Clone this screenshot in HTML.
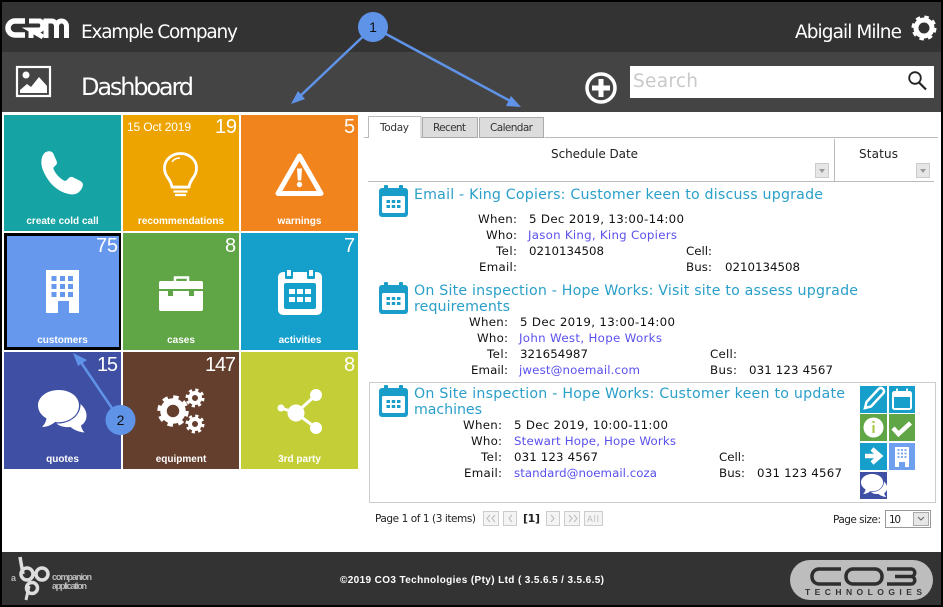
<!DOCTYPE html>
<html><head><meta charset="utf-8"><style>
html,body{margin:0;padding:0;background:#000;width:943px;height:607px;overflow:hidden}
svg{display:block}
text{font-family:"DejaVu Sans","Liberation Sans",sans-serif;white-space:pre}
.h{fill:#fff}
.n{font-family:"Liberation Sans",sans-serif;fill:#fff;font-size:20px}
.l{font-family:"Liberation Sans",sans-serif;fill:#fff;font-size:10px;font-weight:bold;text-anchor:middle}
.t{font-size:14.2px;fill:#2a9fc9}
.c{font-size:11.8px;fill:#111}
.a{font-size:11.8px;fill:#5a50ee}
.p{font-size:10.5px;fill:#222}
.b{fill:#f4f4f4;stroke:#ccc}
.g{font-family:"Liberation Sans",sans-serif;font-size:9px;font-weight:bold;fill:#bbb}
</style></head><body>
<svg width="943" height="607" viewBox="0 0 943 607" xmlns="http://www.w3.org/2000/svg">
<defs>
<g id="cal"><rect x="0" y="3" width="29" height="29" rx="3" fill="#1b9dc9"/><rect x="3" y="11" width="23" height="17" rx="1.5" fill="#fff"/><rect x="5" y="0" width="4" height="7" rx="1" fill="#1b9dc9"/><rect x="20" y="0" width="4" height="7" rx="1" fill="#1b9dc9"/><rect x="7.500" y="15" width="3.500" height="3" fill="#1b9dc9"/><rect x="12.750" y="15" width="3.500" height="3" fill="#1b9dc9"/><rect x="18" y="15" width="3.500" height="3" fill="#1b9dc9"/><rect x="7.500" y="20" width="3.500" height="3" fill="#1b9dc9"/><rect x="12.750" y="20" width="3.500" height="3" fill="#1b9dc9"/><rect x="18" y="20" width="3.500" height="3" fill="#1b9dc9"/></g>
<g id="bub"><path d="M20.500 0C9 0 0 7 0 15.500c0 5.500 3.500 10 8.500 13-.5 3-2 6-4.500 8.500 5 0 9.500-2 13-5 1 .2 2 .2 3.500.2 11.500 0 20.500-7.500 20.500-16.700S32 0 20.500 0z" fill="#fff"/><path d="M42.500 14c.5 10-8 18-20 19.500-1.500 0-3 0-4 0 3.500 3 8.500 4 14 3.500 3 2.500 8 5 14 5.500-2-2-3-4.500-3.500-7 4-2.500 5.500-6 5.500-10 0-4-2-8-6-11.500z" fill="#fff"/></g>
</defs>

<rect x="2" y="2" width="939" height="50" fill="#333"/>
<rect x="2" y="52" width="939" height="60" fill="#444"/>
<rect x="2" y="112" width="939" height="440" fill="#fff"/>
<rect x="2" y="552" width="939" height="53" fill="#333"/>

<!-- CRM logo -->
<g fill="none" stroke="#fff" stroke-width="5.500">
<path d="M25 21H15a6.500 6.500 0 0 0 0 14h10"/>
<path d="M29 21H40a5 5 0 0 1 0 9H31l12 7M31 30v8" stroke-width="5"/>
<path d="M46 38V21h5.500a5 5 0 0 1 5 5v12M56.500 26a5 5 0 0 1 5-5h0a5 5 0 0 1 5 5v12" stroke-width="5"/>
</g>
<text class="h" x="81" y="38" font-size="18.500" textLength="157">Example Company</text>
<text class="h" x="81" y="95" font-size="24" textLength="113">Dashboard</text>
<text class="h" x="795" y="38" font-size="18.500" textLength="107">Abigail Milne</text>

<!-- settings gear -->
<circle cx="924" cy="28" r="8" fill="none" stroke="#fff" stroke-width="5"/>
<circle cx="924" cy="28" r="10.500" fill="none" stroke="#fff" stroke-width="4" stroke-dasharray="4.200 4.050"/>

<!-- picture icon -->
<rect x="17" y="67" width="33" height="29" fill="none" stroke="#fff" stroke-width="2.200"/>
<circle cx="26" cy="75" r="3.500" fill="#fff"/>
<path d="M20 93v-3l7-6 4 3 8-10 8 9v7z" fill="#fff"/>

<!-- add -->
<circle cx="601" cy="88" r="14" fill="none" stroke="#fff" stroke-width="3.500"/>
<path d="M601 79v18M592 88h18" stroke="#fff" stroke-width="5"/>

<!-- search -->
<rect x="630" y="66" width="304" height="32" fill="#fff"/>
<text x="633" y="87" font-size="18.500" fill="#c9c9c9" textLength="65">Search</text>
<circle cx="915" cy="78" r="5.800" fill="none" stroke="#222" stroke-width="1.800"/>
<path d="M919 82.500l7 7" stroke="#222" stroke-width="2.200"/>

<!-- tiles -->
<rect x="4" y="115" width="117" height="116" fill="#15a3a3"/>
<rect x="123" y="115" width="116" height="116" fill="#eea400"/>
<rect x="241" y="115" width="117" height="116" fill="#f2841d"/>
<rect x="4" y="233" width="117" height="117" fill="#000"/>
<rect x="7" y="236" width="112" height="111" fill="#6699ee"/>
<rect x="123" y="233" width="116" height="117" fill="#60a646"/>
<rect x="241" y="233" width="117" height="117" fill="#14a0cb"/>
<rect x="4" y="352" width="117" height="117" fill="#3f4fa3"/>
<rect x="123" y="352" width="116" height="117" fill="#653f2e"/>
<rect x="241" y="352" width="117" height="117" fill="#c4cf38"/>

<text class="n" x="215" y="133" textLength="22">19</text>
<text class="n" x="344" y="133" font-size="20">5</text>
<text x="127" y="131" font-size="12" fill="#fff" textLength="64" style="font-family:'Liberation Sans',sans-serif">15 Oct 2019</text>
<text class="n" x="96" y="252" textLength="22">75</text>
<text class="n" x="225" y="252">8</text>
<text class="n" x="344" y="252">7</text>
<text class="n" x="97" y="371" textLength="21">15</text>
<text class="n" x="205" y="371" textLength="31">147</text>
<text class="n" x="344" y="371">8</text>

<text class="l" x="62.500" y="224">create cold call</text>
<text class="l" x="181" y="224">recommendations</text>
<text class="l" x="299.500" y="224">warnings</text>
<text class="l" x="62.500" y="343">customers</text>
<text class="l" x="181" y="343">cases</text>
<text class="l" x="300" y="343">activities</text>
<text class="l" x="62.500" y="462">quotes</text>
<text class="l" x="181" y="462">equipment</text>
<text class="l" x="299.500" y="462">3rd party</text>

<!-- phone -->
<path transform="translate(41 151) scale(1.050) translate(-37 -151)" d="M42 152c3-1.500 6-.5 7 2l3 7c.7 2-.5 3.500-2.500 5-1 1-.7 2 0 3.500 2 4 5 7 9 9.500 1.500.8 2.500.5 3.500-.7 1.500-2 3-3 5-2.500l7 3.500c2.500 1.200 3.500 3 2.500 6-1.500 4-5 7-9 7-9 0-18-6-23-13-5-7-8-14-7-20 .5-3.500 2-6 4-7.300z" fill="#fff"/>
<!-- bulb -->
<path d="M172 187c-.5-4-2.500-7-5-10.500-2-3-2.500-6-2.500-8.500 0-8 7-14.500 16-14.500s16 6.500 16 14.500c0 2.500-.5 5.500-2.500 8.500-2.500 3.500-4.500 6.500-5 10.500z" fill="none" stroke="#fff" stroke-width="2.800"/>
<path d="M172 162c1.500-2.500 4.500-4 8-4" fill="none" stroke="#fff" stroke-width="1.500"/>
<path d="M172.500 187.500h16M173.500 191.500h14M175 195h11" stroke="#fff" stroke-width="2.200"/>
<!-- warning -->
<path d="M299.500 156L278 193.500h43z" fill="none" stroke="#fff" stroke-width="5" stroke-linejoin="round"/>
<path d="M297 168.500h5l-.8 12h-3.400z" fill="#fff"/><circle cx="299.500" cy="184.500" r="2.700" fill="#fff"/>

<!-- building -->
<path d="M46 270h33v43H69v-12H58v12H46z" fill="#fff"/>
<g fill="#6699ee"><rect x="51.500" y="276" width="5" height="5"/><rect x="60" y="276" width="5" height="5"/><rect x="68" y="276" width="5" height="5"/><rect x="51.500" y="284" width="5" height="5"/><rect x="60" y="284" width="5" height="5"/><rect x="68" y="284" width="5" height="5"/><rect x="51.500" y="292" width="5" height="5"/><rect x="60" y="292" width="5" height="5"/><rect x="68" y="292" width="5" height="5"/></g>
<!-- briefcase -->
<path d="M175 282v-4.500h13v4.500" fill="none" stroke="#fff" stroke-width="2.500"/>
<rect x="159" y="281" width="44" height="30" rx="2" fill="#fff"/>
<rect x="159" y="289" width="44" height="2" fill="#60a646"/>
<rect x="168" y="289" width="5" height="7" fill="#60a646"/><rect x="189" y="289" width="5" height="7" fill="#60a646"/>
<!-- calendar tile -->
<rect x="278" y="272" width="44" height="43" rx="5" fill="#fff"/>
<rect x="285" y="268" width="8" height="11" rx="1.500" fill="#14a0cb"/><rect x="307" y="268" width="8" height="11" rx="1.500" fill="#14a0cb"/>
<rect x="287" y="270" width="4" height="6" fill="#fff"/><rect x="309" y="270" width="4" height="6" fill="#fff"/>
<rect x="284" y="283" width="32" height="26" rx="2" fill="#14a0cb"/>
<g fill="#fff"><rect x="289" y="289" width="6" height="5"/><rect x="297" y="289" width="6" height="5"/><rect x="305" y="289" width="6" height="5"/><rect x="289" y="297" width="6" height="5"/><rect x="297" y="297" width="6" height="5"/><rect x="305" y="297" width="6" height="5"/></g>
<!-- bubbles -->
<use href="#bub" transform="translate(38 390)"/>
<!-- gears -->
<g fill="none" stroke="#fff">
<circle cx="173" cy="411" r="9.500" stroke-width="6.500"/><circle cx="173" cy="411" r="13.500" stroke-width="4.500" stroke-dasharray="5.300 5.300"/>
<circle cx="195" cy="398" r="5" stroke-width="4"/><circle cx="195" cy="398" r="8" stroke-width="3" stroke-dasharray="3.100 3.180"/>
<circle cx="195" cy="424" r="5" stroke-width="4"/><circle cx="195" cy="424" r="8" stroke-width="3" stroke-dasharray="3.100 3.180"/>
</g>
<!-- share -->
<path d="M296 413L316 395M296 413L316 428M296 413L281 408" stroke="#fff" stroke-width="3"/>
<circle cx="296" cy="413" r="8.500" fill="#fff"/><circle cx="316" cy="395" r="6" fill="#fff"/><circle cx="316" cy="428" r="6" fill="#fff"/><circle cx="281" cy="408" r="3.500" fill="#fff"/>

<!-- tabs -->
<path d="M364 137.500h4.500v-21h52.500v21h1M544.500 137.500H938" fill="none" stroke="#bbb"/>
<rect x="422.500" y="117.500" width="55" height="20" fill="#dcdcdc" stroke="#aaa"/>
<rect x="479.500" y="117.500" width="64" height="20" fill="#dcdcdc" stroke="#aaa"/>
<text x="380" y="131" font-size="10.500" fill="#333" textLength="29">Today</text>
<text x="433" y="131" font-size="10.500" fill="#333" textLength="33">Recent</text>
<text x="490" y="131" font-size="10.500" fill="#333" textLength="43">Calendar</text>

<!-- grid header -->
<text x="551" y="158" font-size="12" fill="#222" textLength="87">Schedule Date</text>
<text x="859" y="158" font-size="12" fill="#222" textLength="39">Status</text>
<path d="M834.500 139v42M368 181.500h566" stroke="#bbb" fill="none"/>
<rect x="815.500" y="163.500" width="13" height="14" fill="#e6e6e6" stroke="#ccc"/><path d="M819 169h6l-3 4z" fill="#999"/>
<rect x="916.500" y="163.500" width="13" height="14" fill="#e6e6e6" stroke="#ccc"/><path d="M920 169h6l-3 4z" fill="#999"/>

<!-- row 1 -->
<use href="#cal" x="379" y="185"/>
<text class="t" x="414" y="199" textLength="409">Email - King Copiers: Customer keen to discuss upgrade</text>
<text class="c" x="478" y="223" textLength="39">When:</text>
<text class="c" x="486" y="239" textLength="31">Who:</text>
<text class="c" x="496" y="255" textLength="21">Tel:</text>
<text class="c" x="479" y="271" textLength="38">Email:</text>
<text class="c" x="529" y="223" textLength="155">5 Dec 2019, 13:00-14:00</text>
<text class="a" x="528" y="239" textLength="149">Jason King, King Copiers</text>
<text class="c" x="529" y="255" textLength="75">0210134508</text>
<text class="c" x="686" y="255" textLength="26">Cell:</text>
<text class="c" x="686" y="271" textLength="26">Bus:</text>
<text class="c" x="725" y="271" textLength="75">0210134508</text>

<!-- row 2 -->
<use href="#cal" x="379" y="282"/>
<text class="t" x="414" y="295" textLength="444">On Site inspection - Hope Works: Visit site to assess upgrade</text>
<text class="t" x="414" y="311" textLength="96">requirements</text>
<text class="c" x="469" y="326" textLength="39">When:</text>
<text class="c" x="477" y="342" textLength="31">Who:</text>
<text class="c" x="487" y="358" textLength="21">Tel:</text>
<text class="c" x="471" y="374" textLength="37">Email:</text>
<text class="c" x="520" y="326" textLength="155">5 Dec 2019, 13:00-14:00</text>
<text class="a" x="519" y="342" textLength="143">John West, Hope Works</text>
<text class="c" x="520" y="358" textLength="68">321654987</text>
<text class="a" x="519" y="374" textLength="121">jwest@noemail.com</text>
<text class="c" x="710" y="358" textLength="27">Cell:</text>
<text class="c" x="710" y="374" textLength="27">Bus:</text>
<text class="c" x="749" y="374" textLength="84">031 123 4567</text>

<!-- row 3 -->
<rect x="369.500" y="382.500" width="566" height="120" fill="#fff" stroke="#ccc"/>
<use href="#cal" x="379" y="385"/>
<text class="t" x="414" y="398" textLength="431">On Site inspection - Hope Works: Customer keen to update</text>
<text class="t" x="414" y="414" textLength="68">machines</text>
<text class="c" x="463" y="429" textLength="39">When:</text>
<text class="c" x="471" y="445" textLength="31">Who:</text>
<text class="c" x="481" y="461" textLength="21">Tel:</text>
<text class="c" x="464" y="477" textLength="38">Email:</text>
<text class="c" x="514" y="429" textLength="154">5 Dec 2019, 10:00-11:00</text>
<text class="a" x="514" y="445" textLength="162">Stewart Hope, Hope Works</text>
<text class="c" x="514" y="461" textLength="84">031 123 4567</text>
<text class="a" x="514" y="477" textLength="143">standard@noemail.coza</text>
<text class="c" x="719" y="461" textLength="26">Cell:</text>
<text class="c" x="719" y="477" textLength="26">Bus:</text>
<text class="c" x="757" y="477" textLength="85">031 123 4567</text>

<!-- action icons -->
<rect x="860" y="386" width="27" height="27" fill="#169fcb"/>
<rect x="889" y="386" width="26" height="27" fill="#169fcb"/>
<rect x="860" y="414" width="27" height="27" fill="#60a646"/>
<rect x="889" y="414" width="26" height="27" fill="#60a646"/>
<rect x="860" y="443" width="27" height="27" fill="#169fcb"/>
<rect x="889" y="443" width="26" height="27" fill="#6f9fef"/>
<rect x="860" y="472" width="27" height="27" fill="#3f4fa3"/>
<path d="M865 408l1.500-6 12-13c1.500-1.500 3-1.500 4.500 0s1.500 3 0 4.500l-12 13z" fill="none" stroke="#fff" stroke-width="2.500"/>
<rect x="893" y="392" width="18" height="17" rx="1.500" fill="none" stroke="#fff" stroke-width="2"/><path d="M893 395h18" stroke="#fff" stroke-width="4"/><path d="M897 388.500v3M907 388.500v3" stroke="#fff" stroke-width="1.800"/>
<circle cx="873.500" cy="427.500" r="10" fill="#fff"/><path d="M873.500 425v8M873.500 421v2" stroke="#a7c23c" stroke-width="2"/>
<path d="M893 428l5.500 6 12-11" fill="none" stroke="#fff" stroke-width="4.500"/>
<path d="M865 456h11M872 449l8 7-8 7" fill="none" stroke="#fff" stroke-width="4.500"/>
<path d="M895 447h14v20h-4v-5h-6v5h-4z" fill="#fff"/>
<path d="M897.500 450h9M897.500 453.500h9M897.500 457h9" stroke="#6f9fef" stroke-width="1.800" stroke-dasharray="2 1.500"/>
<use href="#bub" transform="translate(861 474) scale(.54)"/>

<!-- pager -->
<text class="p" x="375" y="522" textLength="101">Page 1 of 1 (3 items)</text>
<rect class="b" x="483.500" y="511.500" width="15" height="14"/><rect class="b" x="503.500" y="511.500" width="13" height="14"/>
<rect class="b" x="546.500" y="511.500" width="13" height="14"/><rect class="b" x="564.500" y="511.500" width="15" height="14"/><rect class="b" x="584.500" y="511.500" width="18" height="14"/>
<g fill="none" stroke="#bbb"><path d="M490 515l-3 3.500 3 3.500M495 515l-3 3.500 3 3.500M512 515l-3 3.500 3 3.500M551 515l3 3.500-3 3.500M569 515l3 3.500-3 3.500M574 515l3 3.500-3 3.500"/></g>
<text x="587" y="522" font-size="8.500" fill="#bbb" textLength="12">All</text>
<text x="523" y="522" font-size="11" font-weight="bold" fill="#222" textLength="17">[1]</text>
<text class="p" x="833" y="523" textLength="48">Page size:</text>
<rect x="885.500" y="510.500" width="45" height="17" fill="#fff" stroke="#999"/>
<text class="p" x="889" y="523" textLength="12">10</text>
<rect x="913.500" y="512.500" width="15" height="13" fill="#e6e6e6" stroke="#aaa"/><path d="M918 517l3 3 3-3" fill="none" stroke="#666"/>

<!-- footer -->
<text x="340" y="583" font-size="10" fill="#fff" font-weight="bold" textLength="264" style="font-family:'Liberation Sans',sans-serif">©2019 CO3 Technologies (Pty) Ltd ( 3.5.6.5 / 3.5.6.5)</text>
<g fill="none" stroke="#ddd" stroke-width="3.500"><path d="M20 557l3 17"/><circle cx="27" cy="574" r="6"/><circle cx="42" cy="574" r="6"/><circle cx="32" cy="588" r="5.500"/><path d="M29 586l-3 14" stroke-width="3"/></g>
<text class="g" x="11" y="581" font-size="7">a</text>
<text class="g" x="52" y="580" textLength="40">companion</text>
<text class="g" x="52" y="589" textLength="35">application</text>

<rect x="790" y="560" width="143" height="40" rx="20" fill="#bdbdbd"/>
<g fill="none" stroke="#2e2e2e" stroke-width="3.500">
<path d="M841 569h-22a7 7 0 0 0-7 7v1a7 7 0 0 0 7 7h22"/>
<rect x="846" y="569" width="36" height="15" rx="7"/>
<path d="M887 569h24a3.750 3.750 0 0 1 0 7.500h-16h16a3.750 3.750 0 0 1 0 7.500h-24"/>
</g>
<text x="805" y="595" font-size="8.500" fill="#333" textLength="117" style="font-family:'Liberation Sans',sans-serif;font-weight:bold">TECHNOLOGIES</text>

<!-- annotations -->
<g stroke="#5f93e8" stroke-width="2.500" fill="none">
<path d="M373 27L296 100M373 27L514 103M120 420L78 358"/>
</g>
<g fill="#5f93e8">
<path d="M291 104l7-13 7 8z"/>
<path d="M521 107l-15-1 5-10z"/>
<path d="M73 353l14 7-9 6z"/>
<circle cx="373" cy="27" r="15"/>
<circle cx="120.500" cy="420" r="15"/>
</g>
<text x="373" y="32" font-size="14" text-anchor="middle" fill="#111" style="font-family:'Liberation Sans',sans-serif">1</text>
<text x="120.500" y="425" font-size="14" text-anchor="middle" fill="#111" style="font-family:'Liberation Sans',sans-serif">2</text>
</svg>
</body></html>
